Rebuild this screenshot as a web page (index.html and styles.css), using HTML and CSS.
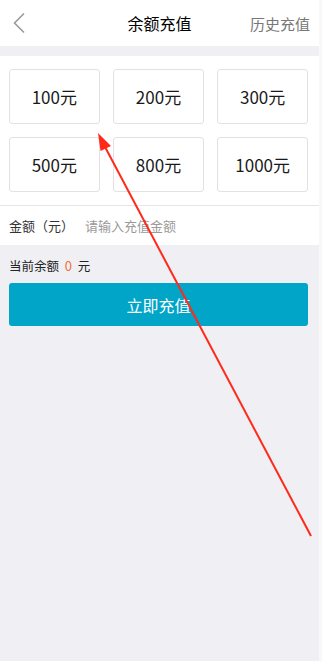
FILE: index.html
```html
<!DOCTYPE html>
<html lang="zh-CN">

<head>
  <meta charset="UTF-8" />
  <meta name="viewport" content="width=device-width, initial-scale=1.0" />
  <title>余额充值</title>
  <link rel="stylesheet" href="styles.css">
</head>

<body>
  <div class="app">
    <!-- 顶部导航 -->
    <header class="nav">
      <span class="nav-back">
        <svg width="14" height="22" viewBox="0 0 14 22">
          <path d="M12 1.5 L2.5 11 L12 20.5" fill="none" stroke="#9a9a9a" stroke-width="1.6" />
        </svg>
      </span>
      <h1 class="nav-title">余额充值</h1>
      <a class="nav-link" href="#">历史充值</a>
    </header>

    <!-- 金额选项 -->
    <section class="amounts">
      <button class="amount">100元</button>
      <button class="amount">200元</button>
      <button class="amount">300元</button>
      <button class="amount">500元</button>
      <button class="amount">800元</button>
      <button class="amount">1000元</button>
    </section>

    <div class="input-row">
      <label for="money">金额（元）</label>
      <input id="money" type="text" placeholder="请输入充值金额" />
    </div>

    <p class="balance">当前余额 <span class="balance-num">0</span> 元</p>

    <div class="submit-wrap">
      <button class="submit">立即充值</button>
    </div>
  </div>

  <!-- 标注箭头 -->
  <svg class="mark" width="322" height="661" viewBox="0 0 322 661">
    <line x1="311" y1="536" x2="104" y2="145" stroke="#ff2a1a" stroke-width="2" />
    <polygon points="98,133 100.5,151 111,146" fill="#ff2a1a" />
  </svg>
</body>

</html>
```

FILE: styles.css
```css
/* 全局 */
body {
  margin: 0;
  width: 322px;
  min-height: 661px;
  background-color: #f8f8f9;
  font-family: "Noto Sans CJK SC", "Noto Sans", sans-serif;
  color: #222;
  position: relative;
}

.app {
  width: 319px;
  min-height: 661px;
  background-color: #efeff4;
}

/* 导航栏 */
.nav {
  height: 46px;
  background-color: #fff;
  display: flex;
  align-items: center;
  position: relative;
  margin-bottom: 10px;
}

.nav-back {
  display: flex;
  padding-left: 12px;
}

.nav-title {
  position: absolute;
  left: 0;
  right: 0;
  margin: 0;
  text-align: center;
  font-size: 16px;
  font-weight: 400;
  color: #000;
  pointer-events: none;
}

.nav-link {
  margin-left: auto;
  padding-right: 9px;
  font-size: 15px;
  color: #777;
  text-decoration: none;
}

/* 金额选项 */
.amounts {
  background-color: #fff;
  padding: 13px 11px 13px 9px;
  display: grid;
  grid-template-columns: repeat(3, 1fr);
  column-gap: 13.5px;
  row-gap: 13px;
  border-bottom: 1px solid #e6e6ea;
}

.amount {
  height: 55px;
  border: 1px solid #e2e2e2;
  border-radius: 3px;
  background-color: #fff;
  font-family: inherit;
  font-size: 17px;
  color: #1a1a1a;
  padding: 0;
}

/* 输入行 */
.input-row {
  height: 39px;
  background-color: #fff;
  display: flex;
  align-items: center;
  padding: 0 9px;
}

.input-row label {
  font-size: 13px;
  color: #333;
  width: 76px;
}

.input-row input {
  flex: 1;
  border: none;
  outline: none;
  font-family: inherit;
  font-size: 13px;
  padding: 0;
  color: #333;
}

.input-row input::placeholder {
  color: #9a9a9a;
}

/* 余额 */
.balance {
  margin: 0;
  padding: 11px 9px 0;
  font-size: 12.5px;
  line-height: 20px;
  color: #222;
}

.balance-num {
  color: #f0703c;
  font-size: 13px;
  margin: 0 3px;
}

/* 提交按钮 */
.submit-wrap {
  padding: 7px 11px 0 9px;
}

.submit {
  width: 100%;
  height: 43px;
  border: none;
  border-radius: 3px;
  background-color: #00a5c8;
  color: #fff;
  font-family: inherit;
  font-size: 16px;
}

/* 标注 */
.mark {
  position: absolute;
  left: 0;
  top: 0;
  pointer-events: none;
}
```
